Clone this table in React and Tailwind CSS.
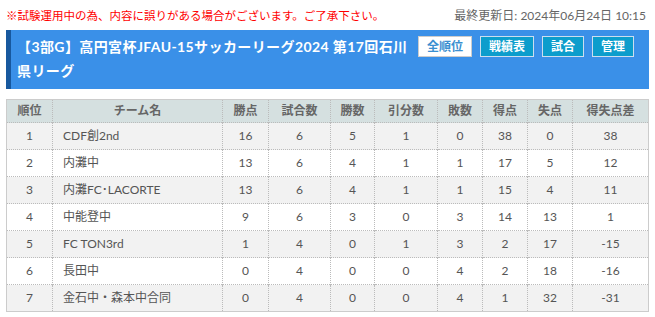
import React from 'react';

const rows = [
  [1, 'CDF創2nd', 16, 6, 5, 1, 0, 38, 0, 38],
  [2, '内灘中', 13, 6, 4, 1, 1, 17, 5, 12],
  [3, '内灘FC･LACORTE', 13, 6, 4, 1, 1, 15, 4, 11],
  [4, '中能登中', 9, 6, 3, 0, 3, 14, 13, 1],
  [5, 'FC TON3rd', 1, 4, 0, 1, 3, 2, 17, -15],
  [6, '長田中', 0, 4, 0, 0, 4, 2, 18, -16],
  [7, '金石中・森本中合同', 0, 4, 0, 0, 4, 1, 32, -31],
];

const headers = [
  ['順位', 'w-[46px]'],
  ['チーム名', 'w-[170px]'],
  ['勝点', 'w-[46px]'],
  ['試合数', 'w-[62px]'],
  ['勝数', 'w-[44px]'],
  ['引分数', 'w-[63px]'],
  ['敗数', 'w-[45px]'],
  ['得点', 'w-[45px]'],
  ['失点', 'w-[45px]'],
  ['得失点差', ''],
];

const App = () => {
  return (
    <div className="w-[655px] h-[317px] overflow-hidden bg-white px-[6px] font-['Lato','Noto_Sans_CJK_JP',sans-serif]">
      {/* notice */}
      <div className="flex items-center justify-between h-[30px] pt-[2px]">
        <p className="text-[11.5px] text-[#ff0000]">※試験運用中の為、内容に誤りがある場合がございます。ご了承下さい。</p>
        <p className="text-[12px] text-[#666] pr-[3px]">最終更新日: 2024年06月24日 10:15</p>
      </div>

      {/* title banner */}
      <div className="flex h-[59px] bg-[#3a90e8] border-l-[5px] border-[#17589e]">
        <h1 className="w-[402px] pl-[6px] pt-[5px] text-[14px] tracking-[0.4px] leading-[24px] font-bold text-white">
          【3部G】高円宮杯JFAU-15サッカーリーグ2024 第17回石川県リーグ
        </h1>
        <div className="flex gap-[8px] pt-[6px] pl-[5px] text-[12px] font-bold">
          <span className="h-[21px] w-[54px] flex items-center justify-center bg-white text-[#3a8fd0] border border-[#ccc]">全順位</span>
          <span className="h-[21px] w-[54px] flex items-center justify-center bg-[#0c9dcc] text-white border border-[#cde]">戦績表</span>
          <span className="h-[21px] w-[42px] flex items-center justify-center bg-[#0c9dcc] text-white border border-[#cde]">試合</span>
          <span className="h-[21px] w-[42px] flex items-center justify-center bg-[#0c9dcc] text-white border border-[#cde]">管理</span>
        </div>
      </div>

      {/* standings */}
      <table className="mt-[10px] w-[643px] border-collapse border border-[#ccc] text-[12px] text-[#555] table-fixed">
        <thead>
          <tr className="bg-[#d5e0e0] h-[23px]">
            {headers.map(([h, w]) => (
              <th key={h} className={`${w} border-l border-dotted border-[#bbb] first:border-l-0 font-bold text-[#666] text-center`}>
                {h}
              </th>
            ))}
          </tr>
        </thead>
        <tbody>
          {rows.map((r, i) => (
            <tr key={r[0]} className={`h-[27px] border-t border-dotted border-[#bbb] ${i % 2 === 0 ? 'bg-[#f2f2f2]' : 'bg-white'}`}>
              {r.map((v, j) => (
                <td
                  key={j}
                  className={`border-l border-dotted border-[#bbb] first:border-l-0 ${j === 1 ? 'text-left pl-[10px]' : 'text-center'}`}
                >
                  {v}
                </td>
              ))}
            </tr>
          ))}
        </tbody>
      </table>
    </div>
  );
};

export default App;
